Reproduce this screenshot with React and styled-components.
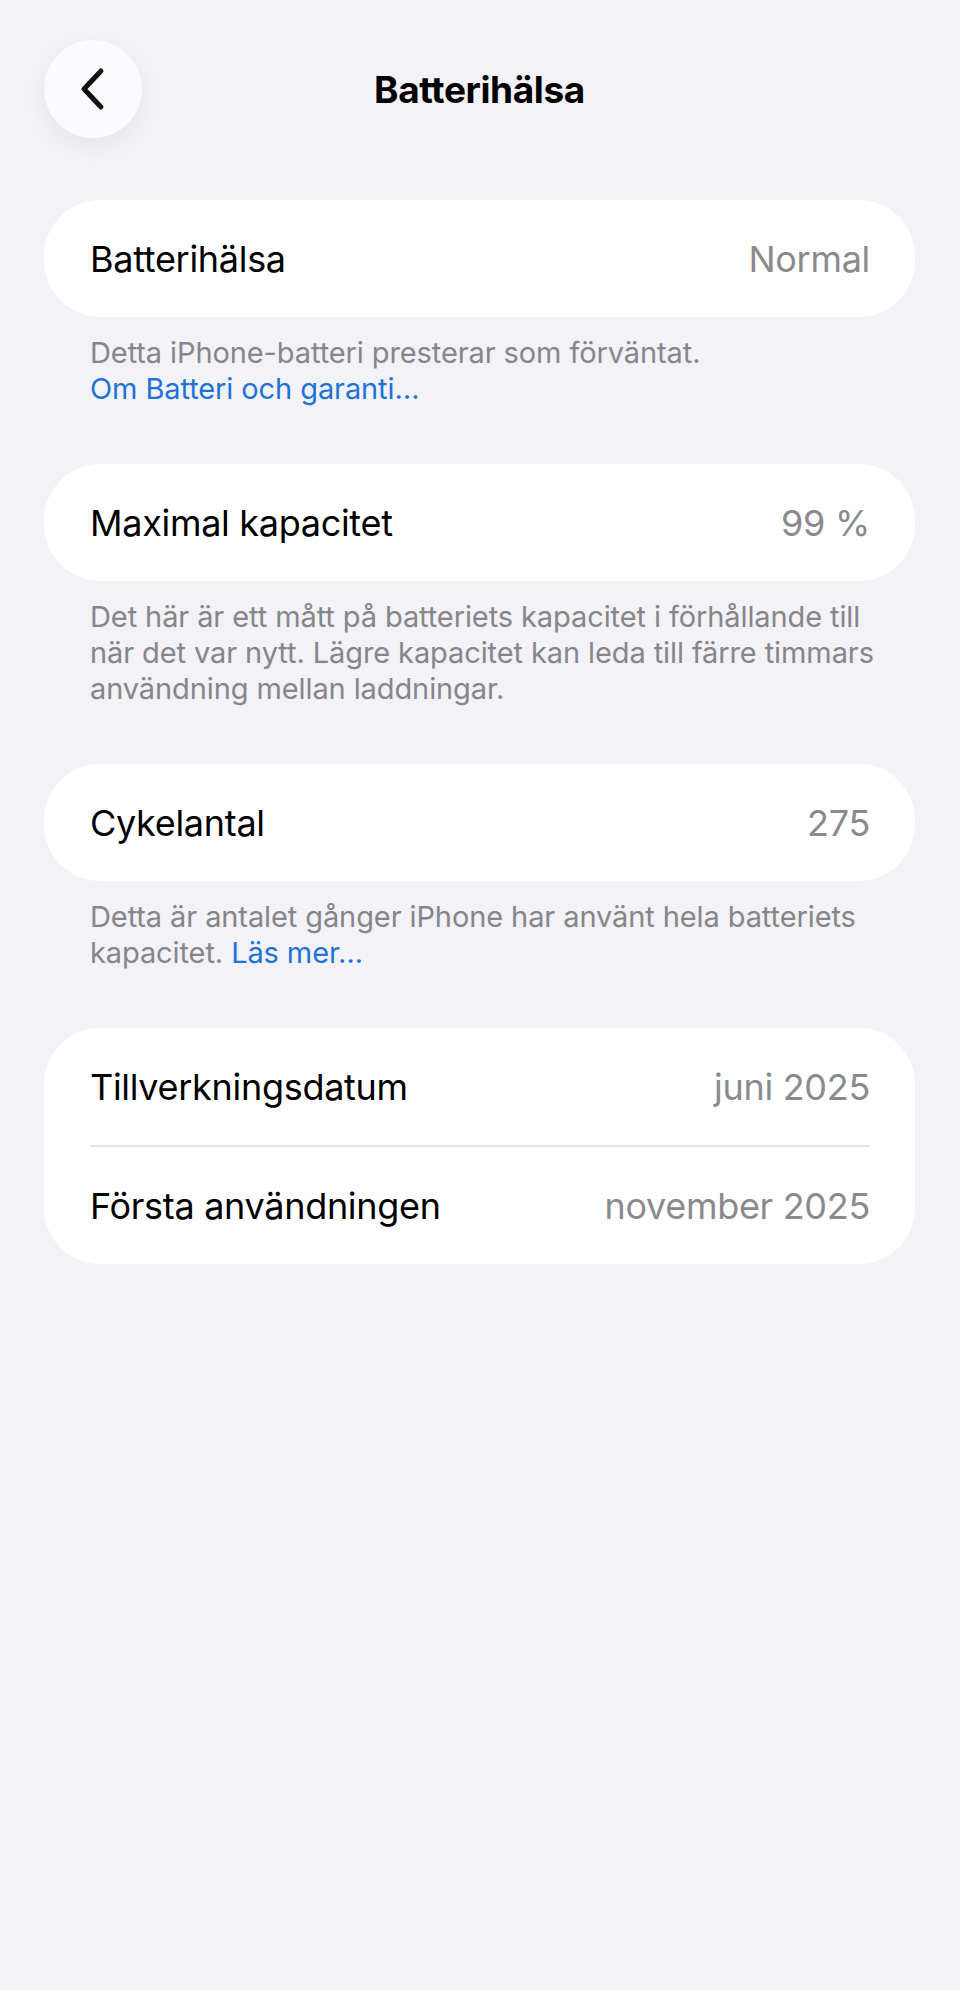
import React from 'react';
import styled, { createGlobalStyle } from 'styled-components';

const GlobalStyle = createGlobalStyle`
  html, body {
    margin: 0;
    padding: 0;
    background: #f2f2f7;
  }
  body {
    font-family: Inter, "Noto Sans", "Liberation Sans", sans-serif;
    -webkit-font-smoothing: antialiased;
  }
`;

const Page = styled.div`
  min-height: 1990px;
  box-sizing: border-box;
  padding: 40px 45px 0 44px;
  background: #f2f2f7;
`;

const Header = styled.header`
  display: grid;
  grid-template-columns: 98px 1fr 98px;
  align-items: center;
  margin-bottom: 62px;
`;

const BackButton = styled.button`
  width: 98px;
  height: 98px;
  border-radius: 50%;
  border: none;
  padding: 0;
  background: #fbfbfd;
  box-shadow: 0 8px 28px rgba(0, 0, 0, 0.06);
  display: flex;
  align-items: center;
  justify-content: center;
  cursor: pointer;
`;

const Title = styled.h1`
  margin: 0;
  text-align: center;
  font-size: 37px;
  font-weight: 700;
  color: #000;
  letter-spacing: -0.4px;
`;

const Section = styled.section`
  margin-bottom: 57px;
`;

const Card = styled.div`
  background: #fff;
  border-radius: 56px;
  padding: 0 45px 0 46px;
`;

const Row = styled.div`
  height: 117px;
  display: flex;
  align-items: center;
  justify-content: space-between;
  & + & {
    border-top: 2px solid #e4e4e7;
  }
`;

const Label = styled.span`
  font-size: 36px;
  color: #000;
  letter-spacing: -0.3px;
`;

const Value = styled.span`
  font-size: 36px;
  color: #8a8a8e;
  letter-spacing: -0.3px;
`;

const Footer = styled.p`
  margin: 18px 0 0;
  padding: 0 40px 0 46px;
  font-size: 29px;
  line-height: 36px;
  color: #86868a;
  letter-spacing: -0.1px;
`;

const Link = styled.a`
  color: #1f72d8;
  text-decoration: none;
`;

const Chevron = () => (
  <svg width="28" height="44" viewBox="0 0 28 44" fill="none">
    <path d="M22 4 L5 22 L22 40" stroke="#111" strokeWidth="5" strokeLinecap="round" strokeLinejoin="round" />
  </svg>
);

export default function App() {
  return (
    <>
      <GlobalStyle />
      <Page>
        <Header>
          <BackButton aria-label="Tillbaka">
            <Chevron />
          </BackButton>
          <Title>Batterihälsa</Title>
          <span />
        </Header>

        <Section>
          <Card>
            <Row>
              <Label>Batterihälsa</Label>
              <Value>Normal</Value>
            </Row>
          </Card>
          <Footer>
            Detta iPhone-batteri presterar som förväntat.
            <br />
            <Link href="#">Om Batteri och garanti…</Link>
          </Footer>
        </Section>

        <Section>
          <Card>
            <Row>
              <Label>Maximal kapacitet</Label>
              <Value>99 %</Value>
            </Row>
          </Card>
          <Footer>
            Det här är ett mått på batteriets kapacitet i förhållande till när det var nytt. Lägre kapacitet kan leda till färre timmars användning mellan laddningar.
          </Footer>
        </Section>

        <Section>
          <Card>
            <Row>
              <Label>Cykelantal</Label>
              <Value>275</Value>
            </Row>
          </Card>
          <Footer>
            Detta är antalet gånger iPhone har använt hela batteriets kapacitet. <Link href="#">Läs mer…</Link>
          </Footer>
        </Section>

        <Section>
          <Card>
            <Row>
              <Label>Tillverkningsdatum</Label>
              <Value>juni 2025</Value>
            </Row>
            <Row>
              <Label>Första användningen</Label>
              <Value>november 2025</Value>
            </Row>
          </Card>
        </Section>
      </Page>
    </>
  );
}
